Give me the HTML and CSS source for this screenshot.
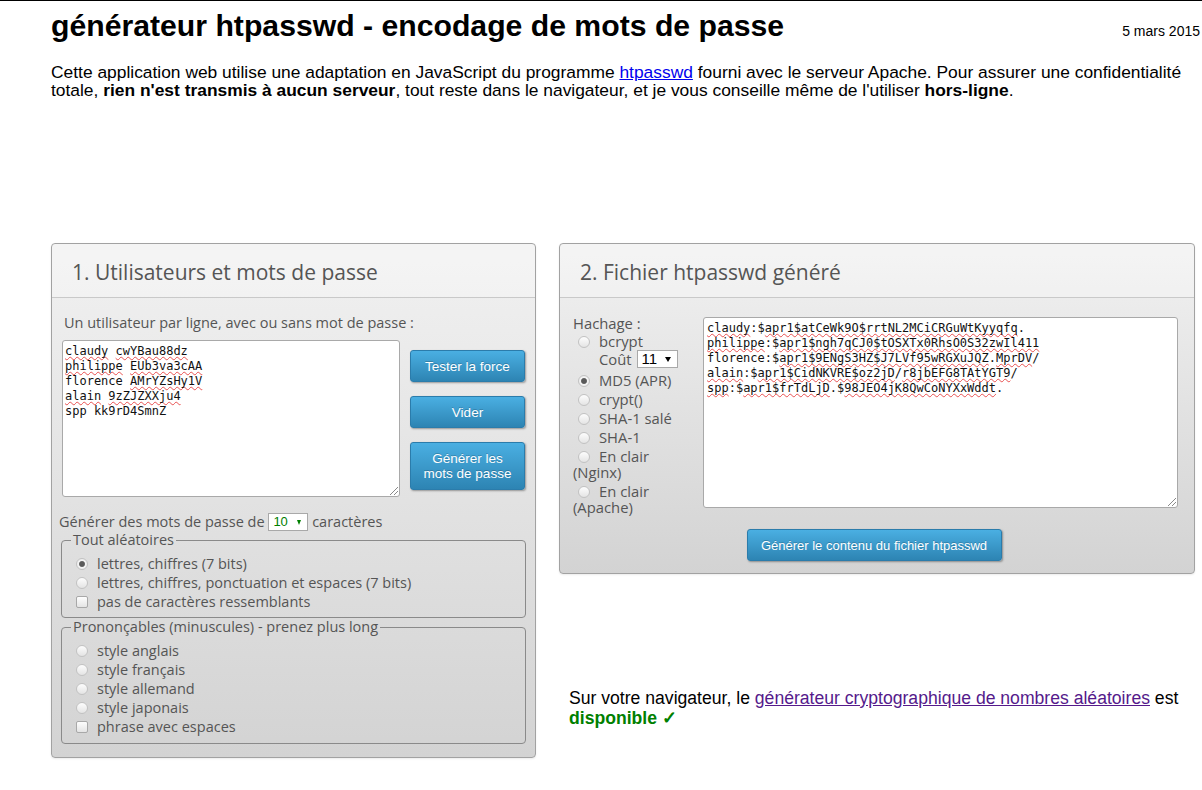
FILE: index.html
```html
<!DOCTYPE html>
<html lang="fr">
<head>
<meta charset="utf-8">
<title>générateur htpasswd - encodage de mots de passe</title>
<link rel="stylesheet" href="styles.css">
</head>
<body>
<div class="page">
  <header class="top">
    <h1 class="title">générateur htpasswd - encodage de mots de passe</h1>
    <span class="date">5 mars 2015</span>
  </header>
  <p class="intro">Cette application web utilise une adaptation en JavaScript du programme <a href="#" class="link">htpasswd</a> fourni avec le serveur Apache. Pour assurer une confidentialité totale, <b>rien n'est transmis à aucun serveur</b>, tout reste dans le navigateur, et je vous conseille même de l'utiliser <b>hors-ligne</b>.</p>

  <div class="columns">
    <section class="panel panel-left">
      <h2 class="panel-head">1. Utilisateurs et mots de passe</h2>
      <div class="panel-body body-left">
        <div class="hint">Un utilisateur par ligne, avec ou sans mot de passe :</div>
        <div class="input-row">
<div class="textbox tb-users" role="textbox"><span class="sp">claudy</span> <span class="sp">cwYBau88dz</span>
<span class="sp">philippe</span> <span class="sp">EUb3va3cAA</span>
florence <span class="sp">AMrYZsHy1V</span>
<span class="sp">alain</span> <span class="sp">9zZJZXXju4</span>
spp kk9rD4SmnZ</div>
          <div class="buttons">
            <button class="btn">Tester la force</button>
            <button class="btn">Vider</button>
            <button class="btn btn-tall">Générer les<br>mots de passe</button>
          </div>
        </div>
        <div class="length-row">Générer des mots de passe de <span class="sel sel-green"><span class="sel-val">10</span><span class="sel-arrow"></span></span> caractères</div>
        <fieldset class="group">
          <legend>Tout aléatoires</legend>
          <label class="opt"><input type="radio" name="gen" checked>lettres, chiffres (7 bits)</label>
          <label class="opt"><input type="radio" name="gen">lettres, chiffres, ponctuation et espaces (7 bits)</label>
          <label class="opt"><input type="checkbox" class="chk">pas de caractères ressemblants</label>
        </fieldset>
        <fieldset class="group group2">
          <legend>Prononçables (minuscules) - prenez plus long</legend>
          <label class="opt"><input type="radio" name="gen">style anglais</label>
          <label class="opt"><input type="radio" name="gen">style français</label>
          <label class="opt"><input type="radio" name="gen">style allemand</label>
          <label class="opt"><input type="radio" name="gen">style japonais</label>
          <label class="opt"><input type="checkbox" class="chk">phrase avec espaces</label>
        </fieldset>
      </div>
    </section>

    <div class="col-right">
      <section class="panel panel-right">
        <h2 class="panel-head">2. Fichier htpasswd généré</h2>
        <div class="panel-body body-right">
          <div class="hash-row">
            <div class="hash-col">
              <div class="hash-title">Hachage :</div>
              <label class="hopt"><input type="radio" name="hash">bcrypt</label>
              <div class="cost">Coût <span class="sel sel-black"><span class="sel-val">11</span><span class="sel-arrow"></span></span></div>
              <label class="hopt hopt-md5"><input type="radio" name="hash" checked>MD5 (APR)</label>
              <label class="hopt"><input type="radio" name="hash">crypt()</label>
              <label class="hopt"><input type="radio" name="hash">SHA-1 salé</label>
              <label class="hopt"><input type="radio" name="hash">SHA-1</label>
              <label class="hopt"><input type="radio" name="hash">En clair (Nginx)</label>
              <label class="hopt"><input type="radio" name="hash">En clair (Apache)</label>
            </div>
<div class="textbox tb-out" role="textbox"><span class="sp">claudy</span>:$<span class="sp">apr1$atCeWk9O$rrtNL2MCiCRGuWtKyyqfq</span>.
<span class="sp">philippe</span>:$<span class="sp">apr1$ngh7qCJ0$tOSXTx0RhsO0S32zwIl411</span>
florence:$<span class="sp">apr1$9ENgS3HZ$J7LVf95wRGXuJQZ</span>.<span class="sp">MprDV</span>/
<span class="sp">alain</span>:$<span class="sp">apr1$CidNKVRE$oz2jD</span>/<span class="sp">r8jbEFG8TAtYGT9</span>/
<span class="sp">spp</span>:$<span class="sp">apr1$frTdLjD</span>.$<span class="sp">98JEO4jK8QwCoNYXxWddt</span>.</div>
          </div>
          <div class="gen-row"><button class="btn btn-wide">Générer le contenu du fichier htpasswd</button></div>
        </div>
      </section>
      <p class="note">Sur votre navigateur, le <a href="#" class="link-visited">générateur cryptographique de nombres aléatoires</a> est <span class="ok">disponible ✓</span></p>
    </div>
  </div>
</div>
</body>
</html>
```

FILE: styles.css
```css
* { box-sizing: border-box; }

html, body {
  margin: 0;
  padding: 0;
  background: #fff;
}

body {
  border-top: 1px solid #000;
  font-family: "Liberation Sans", Arial, sans-serif;
  color: #000;
}

.page {
  padding: 0 2px 30px 51px;
}

.top {
  display: flex;
  align-items: baseline;
  justify-content: space-between;
  padding-top: 8px;
}

.title {
  margin: 0;
  font-size: 30.2px;
  line-height: 34px;
  font-weight: bold;
}

.date {
  font-size: 14px;
}

.intro {
  margin: 20px 0 0;
  width: 1147px;
  font-size: 17.4px;
  line-height: 18px;
}

.link { color: #0000ee; }
.link-visited { color: #551a8b; }

.columns {
  display: flex;
  align-items: flex-start;
  gap: 23px;
  margin-top: 144px;
}

/* Panels */
.panel {
  border: 1px solid #a2a2a2;
  border-radius: 4px;
  background: linear-gradient(#f1f1f1, #d3d3d3);
  font-family: "Open Sans", sans-serif;
  color: #555;
  box-shadow: 0 1px 2px rgba(0, 0, 0, 0.08);
}

.panel-left { width: 485px; }
.panel-right { width: 636px; }

.panel-head {
  margin: 0;
  padding: 16px 20px 13px;
  font-size: 21px;
  font-weight: normal;
  line-height: 24px;
  border-bottom: 1px solid #c9c9c9;
  background: rgba(255, 255, 255, 0.25);
  border-radius: 4px 4px 0 0;
}

.body-left {
  padding: 16px 9px 13px 9px;
}

.hint {
  margin: 0 0 8px 3px;
  font-size: 14.5px;
  line-height: 18px;
}

.input-row {
  display: flex;
  gap: 10px;
  margin-left: 1px;
}

.textbox {
  position: relative;
  background: #fff;
  border: 1px solid #a9a9a9;
  border-radius: 3px;
  font-family: "DejaVu Sans Mono", "Liberation Mono", monospace;
  font-size: 12px;
  line-height: 15px;
  color: #111;
  white-space: pre;
  overflow: hidden;
}

.textbox::after {
  content: "";
  position: absolute;
  right: 1px;
  bottom: 1px;
  width: 9px;
  height: 9px;
  background: linear-gradient(135deg, transparent 0 52%, #8a8a8a 52% 60%, transparent 60% 74%, #8a8a8a 74% 82%, transparent 82%);
}

.tb-users {
  width: 338px;
  height: 157px;
  padding: 3px 2px;
}

.sp {
  text-decoration: underline wavy rgba(225, 30, 30, 0.75);
  text-decoration-thickness: 1px;
  text-decoration-skip-ink: none;
  text-underline-offset: 1px;
}

.buttons {
  display: flex;
  flex-direction: column;
  gap: 14px;
  padding-top: 10px;
}

.btn {
  width: 115px;
  height: 32px;
  padding: 0 4px;
  border: 1px solid #2b7cab;
  border-radius: 3px;
  background: linear-gradient(#4aafe2, #2d84b3);
  box-shadow: 1px 1px 2px rgba(0, 0, 0, 0.35);
  color: #fff;
  font-family: "Liberation Sans", Arial, sans-serif;
  font-size: 13.5px;
  line-height: 15px;
  text-shadow: 0 -1px 0 rgba(0, 0, 0, 0.2);
  cursor: pointer;
}

.btn-tall { height: 48px; }

.btn-wide { width: 255px; font-size: 13px; }

.length-row {
  margin: 16px 0 0 -2px;
  font-size: 14.5px;
  line-height: 18px;
}

/* select lookalike */
.sel {
  display: inline-flex;
  align-items: center;
  justify-content: space-between;
  vertical-align: middle;
  height: 18px;
  background: #fff;
  border: 1px solid #a9a9a9;
  font-family: "Liberation Sans", Arial, sans-serif;
  margin-top: -2px;
}

.sel-green {
  width: 40px;
  padding: 0 6px 0 4px;
  font-size: 13px;
  color: #008000;
}

.sel-black {
  width: 41px;
  padding: 0 6px 0 4px;
  font-size: 15px;
  color: #000;
}

.sel-arrow {
  width: 0;
  height: 0;
  border-left: 3px solid transparent;
  border-right: 3px solid transparent;
  border-top: 5px solid currentColor;
}

.sel-green .sel-arrow {
  border-left-width: 2.5px;
  border-right-width: 2.5px;
}

/* fieldsets */
.group {
  margin: 0;
  padding: 5px 0 6px;
  width: 465px;
  border: 1px solid #8a8a8a;
  border-radius: 4px;
}

.group2 {
  padding-bottom: 7px;
}

.group legend {
  margin-left: 9px;
  padding: 0 2px;
  font-size: 14.5px;
  line-height: 18px;
}

.opt {
  display: flex;
  align-items: center;
  height: 19px;
  padding-left: 14px;
  font-size: 14.5px;
}

input[type="radio"],
input[type="checkbox"] {
  appearance: none;
  -webkit-appearance: none;
  width: 12px;
  height: 12px;
  margin: 0 9px 0 0;
  border: 1px solid #c2c2c2;
  border-radius: 50%;
  background: linear-gradient(#fdfdfd, #e4e4e4);
  flex: none;
}

input[type="radio"]:checked {
  background: radial-gradient(circle, #5a5a5a 0 2.4px, #9a9a9a 2.9px, #f4f4f4 3.4px, #e6e6e6 100%);
}

input.chk {
  border-radius: 2px;
  width: 12px;
  height: 12px;
  border-color: #a8a8a8;
}

/* right panel */
.body-right {
  padding: 17px 15px 12px 13px;
}

.hash-row {
  display: flex;
  align-items: flex-start;
  gap: 10px;
}

.hash-col {
  width: 120px;
  font-size: 14.8px;
  line-height: 16px;
}

.hash-title {
  margin-bottom: 2px;
}

.hopt {
  display: block;
  margin-top: 3px;
}

.hash-title + .hopt { margin-top: 0; }

.hopt input[type="radio"] {
  margin: 0 9px 0 5px;
  vertical-align: -1px;
}

.hopt-md5 { margin-top: 4px; }

.cost {
  display: flex;
  align-items: center;
  gap: 5px;
  height: 19px;
  padding-left: 26px;
}

.cost .sel { margin-top: 1px; }

.tb-out {
  width: 475px;
  height: 191px;
  margin-top: 2px;
  padding: 3px;
}

.gen-row {
  display: flex;
  justify-content: center;
  margin-top: 14px;
  padding-right: 4px;
}

.col-right {
  display: flex;
  flex-direction: column;
  width: 636px;
}

.note {
  margin: 114px 0 0;
  padding-left: 10px;
  font-size: 17.6px;
  line-height: 20px;
}

.ok {
  color: #008000;
  font-weight: bold;
}
```
